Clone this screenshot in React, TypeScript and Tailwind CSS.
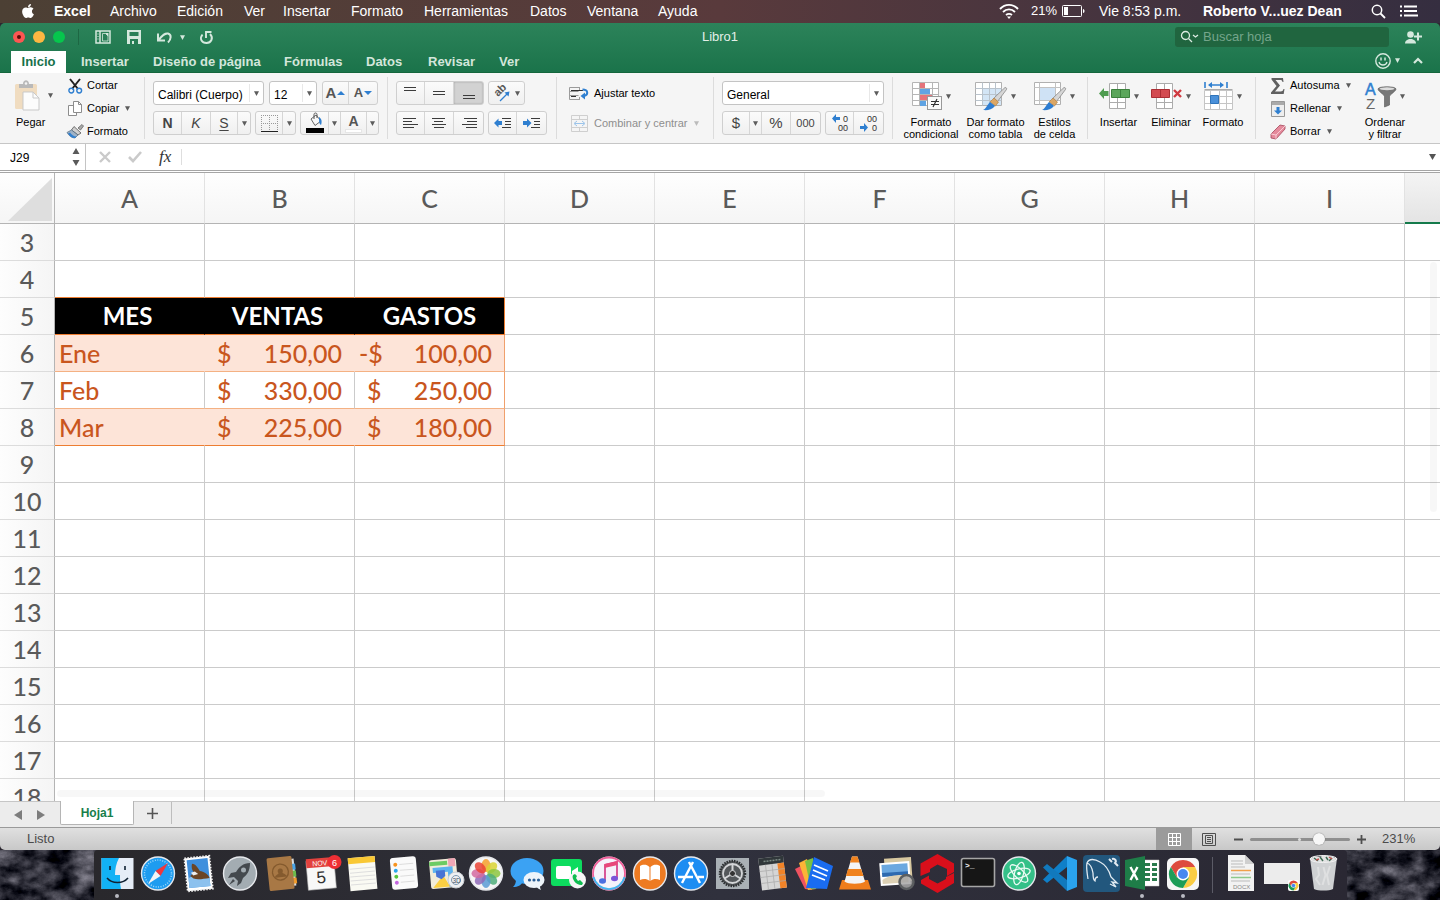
import React from "react";
import { FaApple } from "react-icons/fa";

type Kids = { children?: React.ReactNode };

/* ---------- small shared pieces ---------- */

function Caret({ className = "text-[#5c5c5c]" }: { className?: string }) {
  return (
    <svg viewBox="0 0 5 5" className={`h-[5px] w-[5px] shrink-0 ${className}`} aria-hidden="true">
      <path d="M0 .3h5L2.500 5z" fill="currentColor" />
    </svg>
  );
}

function Icon({ w, h, children, className = "" }: Kids & { w: number; h: number; className?: string }) {
  return (
    <svg width={w} height={h} viewBox={`0 0 ${w} ${h}`} fill="none" className={`shrink-0 overflow-visible ${className}`} aria-hidden="true">
      {children}
    </svg>
  );
}

function ButtonGroup({ children }: Kids) {
  return (
    <div className="flex h-6 divide-x divide-[#d6d6d6] rounded-[3px] border border-[#cfcfcf] bg-gradient-to-b from-[#fbfbfb] to-[#f0f0f0]">
      {children}
    </div>
  );
}

function Tool({ label, width, active = false, children }: Kids & { label: string; width: string; active?: boolean }) {
  return (
    <button
      type="button"
      aria-label={label}
      className={`flex h-full items-center justify-center text-[#444] ${width} ${active ? "rounded-r-[2px] bg-[#d2d2d2] shadow-[inset_0_0_2px_#999]" : ""}`}
    >
      {children}
    </button>
  );
}

function Combo({ label, value, width, pad = "pl-1" }: { label: string; value: string; width: string; pad?: string }) {
  return (
    <div className={`relative h-6 rounded-[3px] border border-[#c4c4c4] bg-white ${width}`}>
      <select aria-label={label} defaultValue={value} className={`h-full w-full appearance-none bg-transparent pb-[2px] text-[12px] text-black outline-none ${pad}`}>
        <option>{value}</option>
      </select>
      <span className="pointer-events-none absolute inset-y-[2px] right-0 flex w-[14px] items-center justify-center border-l border-[#e8e8e8]">
        <Caret />
      </span>
    </div>
  );
}

function Group({ width, children }: Kids & { width: string }) {
  return <section className={`relative h-full shrink-0 ${width}`}>{children}</section>;
}

function Separator() {
  return <div className="my-1 w-px shrink-0 bg-[#dcdcdc]" />;
}

function RowTool({ label, icon, caret = false, muted = false, wide = false }: { label: string; icon: React.ReactNode; caret?: boolean; muted?: boolean; wide?: boolean }) {
  return (
    <button type="button" className={`flex h-[23px] items-center whitespace-nowrap text-[11px] ${muted ? "text-[#8e8e8e]" : "text-black"}`}>
      <span className={`flex justify-center ${wide ? "mr-[5px] w-5" : "mr-[3px] w-[18px]"}`}>{icon}</span>
      {label}
      {caret && <span className="ml-[6px]"><Caret className={muted ? "text-[#bbb]" : "text-[#5c5c5c]"} /></span>}
    </button>
  );
}

function BigTool({ lines, icon, width }: { lines: string[]; icon: React.ReactNode; width: string }) {
  return (
    <button type="button" className={`flex flex-col items-center pt-2 text-[11px] leading-3 text-black ${width}`}>
      <span className="mb-1 flex h-[31px] items-center gap-1">
        {icon}
        <Caret />
      </span>
      {lines.map((l) => (
        <span key={l} className="whitespace-nowrap">{l}</span>
      ))}
    </button>
  );
}

/* ---------- ribbon icons ---------- */

const blue = "#2f7fd0";

const PasteIcon = () => (
  <Icon w={25} h={31}>
    <rect x="0" y="4" width="22" height="25" rx="1.5" fill="#f0dcc0" />
    <path d="M4 8V4h4c0-5 6-5 6 0h4v4z" fill="#b9b9b9" />
    <circle cx="11" cy="3.5" r="1.3" fill="#f5f5f5" />
    <path d="M8 12h10l6 6v12H8z" fill="#fcfcfc" stroke="#c9c9c9" />
    <path d="M18 12v6h6" stroke="#c9c9c9" />
  </Icon>
);

const ScissorsIcon = () => (
  <Icon w={15} h={16}>
    <path d="M2 1l8 10M12 1L4 11" stroke="#222" strokeWidth="2" />
    <circle cx="3.3" cy="12.6" r="2.4" stroke={blue} strokeWidth="1.4" />
    <circle cx="11.2" cy="12.6" r="2.4" stroke={blue} strokeWidth="1.4" />
  </Icon>
);

const CopyIcon = () => (
  <Icon w={15} h={16}>
    <path d="M5.500 4.500h-5v10h8v-3" fill="#fff" stroke="#8d8d8d" />
    <path d="M5.500.500h5l3 3v8h-8z" fill="#fff" stroke="#8d8d8d" />
    <path d="M10.500.500v3h3" stroke="#8d8d8d" />
  </Icon>
);

const BrushIcon = () => (
  <Icon w={17} h={15}>
    <path d="M11 4l4-3.500L16.500 2l-3 4z" fill="#aaa" stroke="#666" strokeWidth=".8" />
    <path d="M7 2.500l7 6.500-3 2-6.500-5z" fill="#cfcfcf" stroke="#666" strokeWidth=".9" />
    <path d="M4.500 6l6.500 5-3 3C5 14 2 12 0 8.500z" fill="#9fb2c6" stroke="#4e6880" strokeWidth=".7" />
    <path d="M1 9.500c2 3 4 4.500 7 4.500l1.500-1.500c-3 0-5-2-6.500-4z" fill={blue} />
  </Icon>
);

function Lines({ rows }: { rows: [number, number, number][] }) {
  return (
    <Icon w={16} h={14}>
      {rows.map(([x, y, w]) => (
        <rect key={y} x={x} y={y} width={w} height="1" fill="#3c3c3c" />
      ))}
    </Icon>
  );
}

const IndentIcon = ({ right = false }: { right?: boolean }) => (
  <Icon w={18} h={12}>
    {right ? <path d="M0 4h4V1.500L8.500 6 4 10.500V8H0z" fill={blue} /> : <path d="M8 4H4.500V1.500L0 6l4.500 4.500V8H8z" fill={blue} />}
    <path d="M8 1.500h9M11 4.500h6M11 7.500h6M8 10.500h9" stroke="#3c3c3c" />
  </Icon>
);

const OrientIcon = () => (
  <Icon w={19} h={18}>
    <text x="0" y="0" transform="translate(5 13) rotate(-45)" fontFamily="Liberation Sans" fontSize="11" fontWeight="bold" fill="#555">ab</text>
    <path d="M7 17l8-8" stroke={blue} strokeWidth="1.3" />
    <path d="M16.500 7.500l-1 5-4-4z" fill={blue} />
  </Icon>
);

const WrapIcon = () => (
  <Icon w={20} h={15}>
    <path d="M11 1.500H.500v12H11M.500 5.500h9M.500 9.500h9M10.500 1.500v3M10.500 11v2.500" stroke="#9b9b9b" />
    <path d="M2 4.500h12M2 10.500h5" stroke="#333" />
    <path d="M13.500 3.500c6 0 6 5.500 1.500 6.500" stroke={blue} strokeWidth="2" />
    <path d="M16 6.500v7L11.500 10z" fill={blue} />
  </Icon>
);

const MergeIcon = () => (
  <Icon w={17} h={17}>
    <path d="M.500.500h16v16H.500zM.500 4.500h16M.500 12.500h16M8.500 .500v4M8.500 12.500v4" stroke="#cfcfcf" />
    <path d="M4 8.500h9M6 6L3 8.500 6 11M11 6l3 2.500L11 11" stroke="#9cc4ea" />
  </Icon>
);

const CondIcon = () => (
  <Icon w={30} h={29}>
    <path d="M.5.500h26v23H.500zM.500 6.500h26M.500 12.500h26M.500 18.500h26M7.500.500v23M20.500.500v23" fill="#fff" stroke="#b5b5b5" />
    <path d="M8 1h5v5H8z" fill="#e5737a" />
    <path d="M8 7h10v5H8z" fill="#5fa3e3" />
    <path d="M8 13h12v5H8z" fill="#e5737a" />
    <path d="M8 19h6v5H8z" fill="#5fa3e3" />
    <rect x="15.500" y="14.500" width="14" height="13" fill="#fafafa" stroke="#999" />
    <path d="M19 19.500h8M19 22.500h8M25 17l-4 8" stroke="#333" strokeWidth="1.200" />
  </Icon>
);

const PaintStroke = () => (
  <>
    <path d="M30 5.500c1.500 0 2 1 1.500 2l-9 12-4-3z" fill="#d6d6d6" stroke="#888" strokeWidth=".8" />
    <path d="M19 16l4.500 4-3 4-5.500-4z" fill="#dba766" stroke="#a9793d" strokeWidth=".6" />
    <path d="M15 20l5 4c-3 4-8 4.500-12 4 3-1 4-5 7-8z" fill="#2d7dd2" />
  </>
);

const TableFormatIcon = () => (
  <Icon w={32} h={29}>
    <path d="M.500.500h26v23H.500z" fill="#fff" stroke="#b0b0b0" />
    <path d="M8 7h18v16H8z" fill="#d3e5f5" />
    <path d="M.500 6.500h26M.500 12.500h26M.500 18.500h26M7.500.500v23M14.500.500v23M20.500.500v23" stroke="#b9c3cc" />
    <PaintStroke />
  </Icon>
);

const CellStyleIcon = () => (
  <Icon w={32} h={29}>
    <path d="M.500.500h26v22H.500z" fill="#fff" stroke="#b0b0b0" />
    <path d="M6 6h15v12H6z" fill="#cfe2f5" />
    <path d="M.500 5.500h26M.500 18.500h26M5.500.500v22M21.500.500v22" stroke="#c2c2c2" />
    <PaintStroke />
  </Icon>
);

const InsertCellsIcon = () => (
  <Icon w={31} h={27}>
    <path d="M10.500.500h16v25h-16zM10.500 19.500h16M18.500.500v25" fill="#fff" stroke="#ababab" />
    <path d="M12.500 6.500h18v8h-18zM21.500 6.500v8" fill="#5ba65b" stroke="#3c813d" />
    <path d="M0 10.500L5 5v3h4.500v5H5v3z" fill="#4f9c50" />
  </Icon>
);

const DeleteCellsIcon = () => (
  <Icon w={31} h={27}>
    <path d="M5.500.500h16v25h-16zM5.500 19.500h16M13.500.500v25" fill="#fff" stroke="#ababab" />
    <path d="M.500 6.500h18v8H.500zM9.500 6.500v8" fill="#d34b51" stroke="#ab2f35" />
    <path d="M23 7l7 7M30 7l-7 7" stroke="#cf3a40" strokeWidth="2.400" />
  </Icon>
);

const FormatCellsIcon = () => (
  <Icon w={29} h={29}>
    <path d="M1 0v6M23 0v6" stroke={blue} strokeWidth="1.600" />
    <path d="M5 3h14" stroke={blue} strokeWidth="1.600" />
    <path d="M4 3l4-3v6zM20 3l-4-3v6z" fill={blue} />
    <path d="M.500 8.500h28v19H.500zM.500 14.500h28M.500 21.500h28M6.500 8.500v19M15.500 8.500v19M22.500 8.500v19" fill="#fff" stroke="#c5c5c5" />
    <path d="M.500 7.500h28" stroke="#aaa" />
    <path d="M6.500 13.500h8v8h-8z" fill="#4a90d9" stroke="#2f74ba" />
  </Icon>
);

const SigmaIcon = () => (
  <Icon w={14} h={16}>
    <path d="M.500 0H12l.5 4h-1c-.3-1.500-.8-2-2.500-2H4.500L9 7.500 4 13.500h5.500c1.800 0 2.500-.8 3-2.500h1l-.8 5H0v-1.500L5.500 8 .5 1.500z" fill="#606060" />
  </Icon>
);

const FillIcon = () => (
  <Icon w={14} h={16}>
    <path d="M.500.500h13v15H.500z" fill="#eee" stroke="#999" />
    <path d="M1 1h12v3H1z" fill="#aaa" />
    <path d="M5.500 6h3v3.500H11L7 13.500 3 9.500h2.500z" fill={blue} />
  </Icon>
);

const EraserIcon = () => (
  <Icon w={16} h={16}>
    <path d="M1 10l9-9 5 1v3L6 15l-5-1z" fill="#e58a9c" stroke="#a4465b" strokeWidth=".8" />
    <path d="M1 10l5 1 9-9M6 11v4" stroke="#f9d3da" strokeWidth=".9" />
  </Icon>
);

const SortIcon = () => (
  <Icon w={31} h={27}>
    <text x="0" y="12" fontFamily="Liberation Sans" fontSize="16" fill={blue} stroke={blue} strokeWidth=".5">A</text>
    <text x="1" y="26" fontFamily="Liberation Sans" fontSize="15" fill="#666">Z</text>
    <path d="M13 6c0-3 18-3 18 0 0 2-5 5-6.500 7v9l-5 2v-11C18 11 13 8 13 6z" fill="#777" stroke="#555" strokeWidth=".6" />
    <ellipse cx="22" cy="5.800" rx="7.500" ry="1.500" fill="#ddd" />
  </Icon>
);

/* ---------- top bars ---------- */

const menus: [string, string][] = [
  ["Archivo", "w-[67px]"],
  ["Edición", "w-[67px]"],
  ["Ver", "w-[39px]"],
  ["Insertar", "w-[68px]"],
  ["Formato", "w-[73px]"],
  ["Herramientas", "w-[106px]"],
  ["Datos", "w-[57px]"],
  ["Ventana", "w-[71px]"],
  ["Ayuda", "w-[50px]"],
];

function MenuBar() {
  return (
    <header className="flex h-[23px] shrink-0 items-center justify-between bg-gradient-to-r from-[#4c4034] via-[#593a3c] to-[#352e40] pb-px text-[14px] leading-5 text-white">
      <nav className="flex items-center pl-5">
        <FaApple className="mr-[18px] h-4 w-4" />
        <button type="button" className="w-14 text-left font-bold">Excel</button>
        {menus.map(([name, w]) => (
          <button key={name} type="button" className={`text-left ${w}`}>{name}</button>
        ))}
      </nav>
      <div className="flex items-center pr-[22px]">
        <Icon w={20} h={16} className="mr-3">
          <path d="M1 6c5-5.500 13-5.500 18 0M4 9c3.500-3.500 8.500-3.500 12 0M7 12c2-1.500 4-1.500 6 0" stroke="#fff" strokeWidth="1.900" />
          <path d="M8 13.500h4L10 16z" fill="#fff" />
        </Icon>
        <span className="mr-[5px] text-[13px]">21%</span>
        <Icon w={23} h={12} className="mr-[14px]">
          <rect x=".5" y=".5" width="19" height="11" rx="1" stroke="#fff" />
          <path d="M2 2h4v8H2zM21 4c2 0 2 4 0 4z" fill="#fff" />
        </Icon>
        <span className="mr-[18px] w-[86px] whitespace-nowrap">Vie 8:53 p.m.</span>
        <span className="mr-6 w-[144px] whitespace-nowrap font-bold">Roberto V...uez Dean</span>
        <Icon w={15} h={15} className="mr-[14px]">
          <circle cx="6" cy="6" r="4.700" stroke="#fff" strokeWidth="1.500" />
          <path d="M9.500 9.500L14 14" stroke="#fff" strokeWidth="1.800" />
        </Icon>
        <Icon w={18} h={12}>
          <path d="M0 1.500h2M4 1.500h13M0 6h2M4 6h13M0 10.500h2M4 10.500h14" stroke="#fff" strokeWidth="1.800" />
        </Icon>
      </div>
    </header>
  );
}

function TitleBar() {
  return (
    <div className="grid h-7 grid-cols-[1fr_auto_1fr] items-center">
      <div className="flex items-center pl-[13px]">
        <button type="button" aria-label="Cerrar" className="mr-2 flex h-3 w-3 items-center justify-center rounded-full bg-[#fc5652]">
          <span className="h-1 w-1 rounded-full bg-[#5c0a08]" />
        </button>
        <button type="button" aria-label="Minimizar" className="mr-2 h-3 w-3 rounded-full bg-[#fdb742]" />
        <button type="button" aria-label="Ampliar" className="h-3 w-3 rounded-full bg-[#06c64d]" />
        <span className="ml-[13px] mr-4 h-4 w-px bg-[#1d6743]" />
        <button type="button" aria-label="Galería">
          <Icon w={16} h={14}>
            <path d="M5 1h10v12H5zM5 1H1v12h4" stroke="#d5e8dd" strokeWidth="1.500" />
            <path d="M2.500 4h1M2.500 6.500h1M2.500 9h1" stroke="#d5e8dd" strokeWidth="1.200" />
            <path d="M7.500 3.500h3l2.500 2.500v5H7.500z" stroke="#d5e8dd" strokeWidth=".8" />
            <path d="M10 3l3.500 3.500V3z" fill="#d5e8dd" />
          </Icon>
        </button>
        <button type="button" aria-label="Guardar" className="ml-4">
          <Icon w={14} h={14}>
            <path d="M0 0h14v14H0zM2.500 2v4h9V2zM3 9v5h8V9z" fill="#d5e8dd" fillRule="evenodd" />
            <path d="M5 11h2v3H5z" fill="#d5e8dd" />
          </Icon>
        </button>
        <button type="button" aria-label="Deshacer" className="ml-4 flex items-center gap-2">
          <Icon w={15} h={13}>
            <path d="M1 2.500v7h7M1.500 9C6 3.500 8 2 11 2.500c4 1 3 6 0 9" stroke="#d5e8dd" strokeWidth="2" />
          </Icon>
          <Caret className="text-[#d5e8dd]" />
        </button>
        <button type="button" aria-label="Repetir" className="ml-[15px]">
          <Icon w={13} h={14}>
            <path d="M2.500 4.500C-1 9 2 13 6.500 13s7.500-5 3.500-9" stroke="#d5e8dd" strokeWidth="1.900" />
            <path d="M6 8V2h5.500" stroke="#d5e8dd" strokeWidth="1.900" />
          </Icon>
        </button>
      </div>
      <h1 className="text-[13px] text-[#e4efe8]">Libro1</h1>
      <div className="flex items-center justify-end pr-[18px]">
        <div className="mr-4 flex h-5 w-[214px] items-center rounded-[3px] bg-[#20653f] pl-[5px]">
          <Icon w={19} h={14} className="mr-1">
            <circle cx="5.500" cy="5.500" r="4" stroke="#dcebe2" strokeWidth="1.300" />
            <path d="M8.500 8.500L12 12M13 5l2.500 2L18 5" stroke="#dcebe2" strokeWidth="1.300" />
          </Icon>
          <input aria-label="Buscar hoja" placeholder="Buscar hoja" className="w-40 bg-transparent text-[13px] text-white outline-none placeholder:text-[#75a58b]" />
        </div>
        <button type="button" aria-label="Compartir">
          <Icon w={17} h={13}>
            <circle cx="5.500" cy="3.500" r="3.300" fill="#d5e8dd" />
            <path d="M0 12.500c0-6 11-6 11 0z" fill="#d5e8dd" />
            <path d="M13 1.500v8M9 5.500h8" stroke="#d5e8dd" strokeWidth="2" />
          </Icon>
        </button>
      </div>
    </div>
  );
}

const ribbonTabs: [string, string][] = [
  ["Insertar", "w-[72px]"],
  ["Diseño de página", "w-[131px]"],
  ["Fórmulas", "w-[82px]"],
  ["Datos", "w-[62px]"],
  ["Revisar", "w-[71px]"],
  ["Ver", "w-[50px]"],
];

function RibbonTabs() {
  return (
    <div className="flex h-[22px] items-stretch justify-between border-b border-[#14663c] pl-[11px] text-[13px] font-bold">
      <nav className="flex">
        <button type="button" className="-mb-px w-[55px] bg-white text-[#17714a]">Inicio</button>
        {ribbonTabs.map(([name, w]) => (
          <button key={name} type="button" className={`whitespace-nowrap pl-[15px] pt-px text-left text-[#d3e6db] ${w}`}>{name}</button>
        ))}
      </nav>
      <div className="flex items-center pb-[2px] pr-[17px]">
        <button type="button" aria-label="Comentarios" className="flex items-center gap-1">
          <Icon w={16} h={16}>
            <circle cx="8" cy="8" r="7.200" stroke="#d5e8dd" strokeWidth="1.400" />
            <path d="M6 4.500v3M10 4.500v3" stroke="#d5e8dd" strokeWidth="1.500" />
            <path d="M4 9c1 4 7 4 8 0" stroke="#d5e8dd" strokeWidth="1.300" />
          </Icon>
          <Caret className="text-[#d5e8dd]" />
        </button>
        <button type="button" aria-label="Contraer cinta" className="ml-[13px]">
          <Icon w={10} h={7}><path d="M1 6l4-4 4 4" stroke="#d5e8dd" strokeWidth="2.200" /></Icon>
        </button>
      </div>
    </div>
  );
}

/* ---------- ribbon ---------- */

function Ribbon() {
  return (
    <div className="flex h-[71px] shrink-0 border-b border-[#c6c6c6] bg-[#f5f5f5]">
      <Group width="w-[144px]">
        <div className="flex">
          <button type="button" className="flex w-[63px] flex-col items-start pl-[15px] pt-[7px] text-[11px] text-black">
            <span className="flex items-center gap-2"><PasteIcon /><Caret /></span>
            <span className="mt-[3px] pl-px">Pegar</span>
          </button>
          <div className="flex flex-col pl-[3px] pt-px">
            <RowTool label="Cortar" icon={<ScissorsIcon />} />
            <RowTool label="Copiar" icon={<CopyIcon />} caret />
            <RowTool label="Formato" icon={<BrushIcon />} />
          </div>
        </div>
      </Group>
      <Separator />
      <Group width="w-[242px]">
        <div className="flex flex-col gap-[6px] pl-2 pt-2">
          <div className="flex gap-[5px]">
            <Combo label="Fuente" value="Calibri (Cuerpo)" width="w-[111px]" />
            <Combo label="Tamaño de fuente" value="12" width="w-[48px]" />
            <ButtonGroup>
              <Tool label="Aumentar fuente" width="w-[26px]">
                <span className="text-[15px] font-bold text-[#555]">A</span>
                <svg viewBox="0 0 8 4" className="ml-px h-1 w-2"><path d="M0 4h8L4 0z" fill="#2f7fd0" /></svg>
              </Tool>
              <Tool label="Reducir fuente" width="w-[28px]">
                <span className="text-[13px] font-bold text-[#555]">A</span>
                <svg viewBox="0 0 8 4" className="ml-px h-1 w-2"><path d="M0 0h8L4 4z" fill="#2f7fd0" /></svg>
              </Tool>
            </ButtonGroup>
          </div>
          <div className="flex gap-1">
            <ButtonGroup>
              <Tool label="Negrita" width="w-[28px]"><span className="text-[14px] font-bold">N</span></Tool>
              <Tool label="Cursiva" width="w-[29px]"><span className="text-[14px] italic">K</span></Tool>
              <Tool label="Subrayado" width="w-[27px]"><span className="text-[14px] underline underline-offset-2">S</span></Tool>
              <Tool label="Opciones de subrayado" width="w-[12px]"><Caret /></Tool>
            </ButtonGroup>
            <ButtonGroup>
              <Tool label="Bordes" width="w-[27px]">
                <Icon w={17} h={17}>
                  <path d="M.500 0v16M8.500 0v16M16.500 0v16M0 .5h17M0 8.500h17" stroke="#999" strokeDasharray="1 1" />
                  <path d="M0 16.500h17" stroke="#222" />
                </Icon>
              </Tool>
              <Tool label="Opciones de bordes" width="w-[12px]"><Caret /></Tool>
            </ButtonGroup>
            <ButtonGroup>
              <Tool label="Color de relleno" width="w-[28px]">
                <Icon w={18} h={20}>
                  <path d="M5 6l5-4 5 6-6 4.500z" fill="#f7f7f7" stroke="#666" />
                  <path d="M8 6V1.500c0-2 3-2 3 0V5" stroke="#555" />
                  <path d="M13 4c3 2 3 5 2 8-2-1-2-4-2-8z" fill={blue} />
                  <path d="M0 15h18v5H0z" fill="#000" />
                </Icon>
              </Tool>
              <Tool label="Opciones de relleno" width="w-[12px]"><Caret /></Tool>
              <Tool label="Color de fuente" width="w-[26px]">
                <span className="flex flex-col items-center">
                  <span className="text-[14px] font-bold leading-4 text-[#555]">A</span>
                  <span className="h-1 w-[17px] border border-[#e6e6e6] bg-white" />
                </span>
              </Tool>
              <Tool label="Opciones de color" width="w-[11px]"><Caret /></Tool>
            </ButtonGroup>
          </div>
        </div>
      </Group>
      <Separator />
      <Group width="w-[168px]">
        <div className="flex flex-col gap-[6px] pl-2 pt-2">
          <div className="flex gap-1">
            <ButtonGroup>
              <Tool label="Alinear arriba" width="w-[28px]"><Lines rows={[[1, 1, 12], [1, 4, 12]]} /></Tool>
              <Tool label="Alinear al medio" width="w-[29px]"><Lines rows={[[2, 5, 12], [2, 8, 12]]} /></Tool>
              <Tool label="Alinear abajo" width="w-[29px]" active><Lines rows={[[2, 9, 12], [2, 12, 12]]} /></Tool>
            </ButtonGroup>
            <ButtonGroup>
              <Tool label="Orientación" width="w-[35px]"><OrientIcon /><span className="ml-[3px]"><Caret /></span></Tool>
            </ButtonGroup>
          </div>
          <div className="flex gap-1">
            <ButtonGroup>
              <Tool label="Alinear a la izquierda" width="w-[28px]"><Lines rows={[[0, 2, 13], [0, 5, 9], [0, 8, 15], [0, 11, 11]]} /></Tool>
              <Tool label="Centrar" width="w-[29px]"><Lines rows={[[1, 2, 13], [3, 5, 9], [1, 8, 14], [3, 11, 10]]} /></Tool>
              <Tool label="Alinear a la derecha" width="w-[29px]"><Lines rows={[[3, 2, 13], [6, 5, 10], [1, 8, 15], [5, 11, 11]]} /></Tool>
            </ButtonGroup>
            <ButtonGroup>
              <Tool label="Disminuir sangría" width="w-[28px]"><IndentIcon /></Tool>
              <Tool label="Aumentar sangría" width="w-[29px]"><IndentIcon right /></Tool>
            </ButtonGroup>
          </div>
        </div>
      </Group>
      <Separator />
      <Group width="w-[156px]">
        <div className="flex flex-col items-start gap-[7px] pl-3 pt-[9px]">
          <RowTool label="Ajustar texto" icon={<WrapIcon />} wide />
          <RowTool label="Combinar y centrar" icon={<MergeIcon />} caret muted wide />
        </div>
      </Group>
      <Separator />
      <Group width="w-[178px]">
        <div className="flex flex-col gap-[6px] pl-2 pt-2">
          <Combo label="Formato de número" value="General" width="w-[162px]" />
          <div className="flex gap-1">
            <ButtonGroup>
              <Tool label="Moneda" width="w-[27px]"><span className="text-[15px]">$</span></Tool>
              <Tool label="Opciones de moneda" width="w-[12px]"><Caret /></Tool>
              <Tool label="Porcentaje" width="w-[29px]"><span className="text-[15px]">%</span></Tool>
              <Tool label="Separador de miles" width="w-[29px]"><span className="text-[11px]">000</span></Tool>
            </ButtonGroup>
            <ButtonGroup>
              <Tool label="Aumentar decimales" width="w-[28px]">
                <Icon w={18} h={18}>
                  <path d="M9 3H5V0L1 4.500 5 9V6h4z" fill={blue} />
                  <text x="12" y="8" fontFamily="Liberation Sans" fontSize="9" fill="#333">0</text>
                  <text x="7" y="17" fontFamily="Liberation Sans" fontSize="9" fill="#333">00</text>
                </Icon>
              </Tool>
              <Tool label="Disminuir decimales" width="w-[29px]">
                <Icon w={18} h={18}>
                  <path d="M0 12h4V9l4 4.500L4 18v-3H0z" fill={blue} />
                  <text x="7" y="8" fontFamily="Liberation Sans" fontSize="9" fill="#333">00</text>
                  <text x="12" y="17" fontFamily="Liberation Sans" fontSize="9" fill="#333">0</text>
                </Icon>
              </Tool>
            </ButtonGroup>
          </div>
        </div>
      </Group>
      <Separator />
      <Group width="w-[194px]">
        <div className="flex pl-[9px]">
          <BigTool width="w-[58px]" lines={["Formato", "condicional"]} icon={<CondIcon />} />
          <BigTool width="w-[71px]" lines={["Dar formato", "como tabla"]} icon={<TableFormatIcon />} />
          <BigTool width="w-[47px]" lines={["Estilos", "de celda"]} icon={<CellStyleIcon />} />
        </div>
      </Group>
      <Separator />
      <Group width="w-[167px]">
        <div className="flex pl-1">
          <BigTool width="w-[53px]" lines={["Insertar"]} icon={<InsertCellsIcon />} />
          <BigTool width="w-[52px]" lines={["Eliminar"]} icon={<DeleteCellsIcon />} />
          <BigTool width="w-[52px]" lines={["Formato"]} icon={<FormatCellsIcon />} />
        </div>
      </Group>
      <Separator />
      <Group width="w-[184px]">
        <div className="flex">
          <div className="flex w-[104px] flex-col items-start pl-[13px] pt-px">
            <RowTool label="Autosuma" icon={<SigmaIcon />} caret />
            <RowTool label="Rellenar" icon={<FillIcon />} caret />
            <RowTool label="Borrar" icon={<EraserIcon />} caret />
          </div>
          <BigTool width="w-[50px]" lines={["Ordenar", "y filtrar"]} icon={<SortIcon />} />
        </div>
      </Group>
    </div>
  );
}

function FormulaBar() {
  return (
    <div className="flex h-[29px] shrink-0 items-center border-b-[3px] border-double border-[#a5a5a5] bg-white">
      <div className="flex h-full w-[86px] items-center justify-between border-r border-[#c4c4c4] pl-[10px] pr-[5px]">
        <input aria-label="Cuadro de nombres" defaultValue="J29" className="w-14 bg-transparent pt-[2px] text-[12px] text-black outline-none" />
        <Icon w={8} h={18}><path d="M.500 6h7L4 0zM.500 12h7L4 18z" fill="#5a5a5a" /></Icon>
      </div>
      <button type="button" aria-label="Cancelar" className="ml-[13px]">
        <Icon w={12} h={12}><path d="M1 1l10 10M11 1L1 11" stroke="#cacaca" strokeWidth="2.400" /></Icon>
      </button>
      <button type="button" aria-label="Aceptar" className="ml-[17px]">
        <Icon w={14} h={12}><path d="M1 6l4 4 8-9" stroke="#cacaca" strokeWidth="2.600" /></Icon>
      </button>
      <span className="ml-[17px] w-[22px] font-['Liberation_Serif',serif] text-[17px] italic leading-5 text-[#333]">fx</span>
      <input aria-label="Barra de fórmulas" className="h-4 min-w-0 flex-1 border-l border-[#dedede] bg-transparent outline-none" />
      <button type="button" aria-label="Expandir" className="mr-1">
        <Icon w={7} h={6}><path d="M0 0h7L3.500 6z" fill="#555" /></Icon>
      </button>
    </div>
  );
}

/* ---------- sheet ---------- */

const columns = ["A", "B", "C", "D", "E", "F", "G", "H", "I"];
const rowNumbers = Array.from({ length: 16 }, (_, i) => i + 3);

type Money = { sign: string; amount: string };
const data: Record<number, [string, Money, Money]> = {
  6: ["Ene", { sign: "$", amount: "150,00" }, { sign: "-$", amount: "100,00" }],
  7: ["Feb", { sign: "$", amount: "330,00" }, { sign: "$", amount: "250,00" }],
  8: ["Mar", { sign: "$", amount: "225,00" }, { sign: "$", amount: "180,00" }],
};
const heads = ["MES", "VENTAS", "GASTOS"];

function Cell({ row, col }: { row: number; col: number }) {
  if (col > 2 || row < 4 || row > 8) return <td className="border-b border-r border-[#cbcbcb] p-0" />;
  if (row === 4) return <td className="border-b border-r border-b-[#ed7d31] border-r-[#cbcbcb] p-0" />;
  if (row === 5)
    return (
      <th scope="col" className={`border-b border-r border-b-[#ed7d31] bg-black p-0 text-center text-[24px] font-bold text-white ${col === 2 ? "border-r-[#ed7d31]" : "border-r-black pr-1"}`}>
        {heads[col]}
      </th>
    );
  const value = data[row][col];
  const band = row === 7 ? "bg-white" : "bg-[#fde4d8]";
  const bottom = row === 8 ? "border-b-[#ed7d31]" : "border-b-[#f4b183]";
  const side = col === 2 ? "border-r-[#f0a06c]" : row === 7 ? "border-r-[#cbcbcb]" : "border-r-[#fde4d8]";
  return (
    <td className={`border-b border-r p-0 font-medium text-[#c9561e] ${band} ${bottom} ${side}`}>
      {typeof value === "string" ? (
        <span className="pl-1">{value}</span>
      ) : (
        <span className={`flex justify-between pr-3 ${value.sign === "-$" ? "pl-1" : "pl-3"}`}>
          <span>{value.sign}</span>
          <span>{value.amount}</span>
        </span>
      )}
    </td>
  );
}

function Sheet() {
  return (
    <main className="relative min-h-0 flex-1 overflow-hidden bg-white">
      <table className="w-full table-fixed border-separate border-spacing-0 font-[Lato,sans-serif] text-[25px] leading-8">
        <colgroup>
          <col className="w-[55px]" />
          {columns.map((c) => <col key={c} className="w-[150px]" />)}
          <col />
        </colgroup>
        <thead>
          <tr className="h-[51px] bg-gradient-to-b from-[#fefefe] to-[#f5f5f5] text-[#5a5a5a]">
            <th className="border-b border-r border-[#b4b4b4] p-0" aria-label="Seleccionar todo">
              <svg viewBox="0 0 54 50" className="h-[50px] w-[54px]"><path d="M52 5v43H8z" fill="#dedede" /></svg>
            </th>
            {columns.map((c) => (
              <th key={c} scope="col" className="border-b border-r border-b-[#b4b4b4] border-r-[#e2e2e2] p-0 font-medium">{c}</th>
            ))}
            <th className="border-b-2 border-[#147a4b] bg-gradient-to-b from-[#f4f4f4] to-[#e4e4e4] p-0" aria-label="J" />
          </tr>
        </thead>
        <tbody>
          {rowNumbers.map((r) => (
            <tr key={r} className="h-[37px]">
              <th scope="row" className="border-b border-r border-b-[#dcdcdc] border-r-[#b4b4b4] bg-gradient-to-r from-[#fdfdfd] to-[#f5f5f5] p-0 font-medium text-[#5a5a5a]">{r}</th>
              {columns.map((c, i) => <Cell key={c} row={r} col={i} />)}
              <td className="border-b border-[#cbcbcb] p-0" />
            </tr>
          ))}
        </tbody>
      </table>
      <div className="absolute bottom-1 left-[57px] h-[7px] w-[768px] rounded-full bg-black/3" />
      <div className="absolute right-[3px] top-[89px] h-[250px] w-[7px] rounded-full bg-black/3" />
    </main>
  );
}

function SheetTabs() {
  return (
    <div className="flex h-[26px] shrink-0 items-start border-t border-[#c6c6c6] bg-[#ececec]">
      <div className="flex h-[25px] w-[60px] items-center gap-[15px] pl-[14px]">
        <button type="button" aria-label="Hoja anterior"><Icon w={8} h={10}><path d="M8 0v10L0 5z" fill="#7d7d7d" /></Icon></button>
        <button type="button" aria-label="Hoja siguiente"><Icon w={8} h={10}><path d="M0 0v10l8-5z" fill="#7d7d7d" /></Icon></button>
      </div>
      <button type="button" className="-mt-px h-[24px] w-[74px] rounded-b-[2px] border-x border-b border-[#b5b5b5] bg-white pt-px text-[12px] font-bold text-[#17804b]">Hoja1</button>
      <button type="button" aria-label="Nueva hoja" className="flex h-[22px] w-[38px] items-center justify-center border-r border-[#bdbdbd]">
        <Icon w={11} h={11}><path d="M5.500 0v11M0 5.500h11" stroke="#555" strokeWidth="1.600" /></Icon>
      </button>
    </div>
  );
}

function StatusBar() {
  return (
    <div className="flex h-[23px] shrink-0 items-center justify-between border-t border-[#9a9a9a] bg-gradient-to-b from-[#e0e0e0] to-[#c8c8c8] pl-[27px] text-[13px] text-[#4b4b4b]">
      <span>Listo</span>
      <div className="flex h-full items-center pr-[22px]">
        <button type="button" aria-label="Vista normal" className="flex h-full w-[36px] items-center justify-center bg-[#9b9b9b]">
          <Icon w={13} h={13}><path d="M.500.500h12v12H.500zM.500 4.500h12M.500 8.500h12M4.500.500v12M8.500.500v12" stroke="#fff" /></Icon>
        </button>
        <button type="button" aria-label="Diseño de página" className="ml-[10px]">
          <Icon w={14} h={13}><path d="M.500.500h13v12h-13zM3.500 2.500h7v8h-7zM5 4.500h4M5 6.500h4M5 8.500h4" stroke="#4f4f4f" /></Icon>
        </button>
        <button type="button" aria-label="Reducir" className="ml-[18px]"><Icon w={9} h={9}><path d="M0 4.500h9" stroke="#4f4f4f" strokeWidth="2" /></Icon></button>
        <div className="relative mx-[7px] flex w-[100px] items-center">
          <input
            type="range"
            aria-label="Zoom"
            min={0}
            max={100}
            defaultValue={72}
            className="h-[3px] w-full appearance-none rounded-full bg-[#8f8f8f] [&::-webkit-slider-thumb]:h-3 [&::-webkit-slider-thumb]:w-3 [&::-webkit-slider-thumb]:appearance-none [&::-webkit-slider-thumb]:rounded-full [&::-webkit-slider-thumb]:bg-[#f7f7f7] [&::-webkit-slider-thumb]:shadow-[0_0_1px_#555]"
          />
          <span className="pointer-events-none absolute left-[48px] h-[3px] w-[3px] rounded-full bg-[#ddd]" />
        </div>
        <button type="button" aria-label="Ampliar"><Icon w={9} h={9}><path d="M0 4.500h9M4.500 0v9" stroke="#4f4f4f" strokeWidth="1.800" /></Icon></button>
        <span className="ml-4 w-[36px]">231%</span>
      </div>
    </div>
  );
}

/* ---------- dock ---------- */

const petals = ["#f6a02c", "#d9d335", "#8cc63f", "#4fae7a", "#5b9bd5", "#8f6bb8", "#d46aa0", "#ea4335"];

const Ring = ({ fill }: { fill: string }) => <circle cx="20" cy="20.500" r="16.500" fill={fill} stroke="#e6e8ec" strokeWidth="1.400" />;

const Chrome = ({ cx, cy, r }: { cx: number; cy: number; r: number }) => (
  <g transform={`translate(${cx} ${cy}) scale(${r / 12})`}>
    <path d="M-10.400-6A12 12 0 0 1 10.400-6L0-5.500-5.200 3z" fill="#dd4b3e" />
    <path d="M10.400-6A12 12 0 0 1 0 12L5.200 3 0-6z" fill="#fbcd43" />
    <path d="M0 12A12 12 0 0 1-10.400-6L-5.200 3 5.200 3z" fill="#1d9d58" />
    <circle r="5.500" fill="#fff" />
    <circle r="4.300" fill="#4688f1" />
  </g>
);

const dockApps: { name: string; running?: boolean; art: React.ReactNode }[] = [
  { name: "Finder", running: true, art: <>
    <path d="M4.500 5h32v31h-32z" fill="#e6edf7" />
    <path d="M4.500 5H22c-3 6-4 11-4 17h5c0 5 0 9 1 14H4.500z" fill="#12b2f5" />
    <path d="M13 13v4M28 13v4" stroke="#123" strokeWidth="1.600" /><path d="M10 25c5 6 16 6 21 0" stroke="#123" strokeWidth="1.500" /></> },
  { name: "Safari", art: <>
    <Ring fill="#1e9cf0" /><circle cx="20" cy="20.500" r="13.500" stroke="#9bd7fb" strokeDasharray="1 1.500" strokeWidth="1.500" />
    <path d="M30 10L22.500 23l-5-5z" fill="#f0373b" /><path d="M10 31l7.500-13 5 5z" fill="#f4f4f4" /></> },
  { name: "Mail", art: <g transform="rotate(-6 20 20)">
    <path d="M7 4h25v33H7z" fill="#fff" stroke="#f2f2f2" strokeWidth="2" strokeDasharray="1.500 1.500" /><path d="M9 6h21v28H9z" fill="#3f8fdd" /><path d="M9 24c8-3 14 0 21 2v8H9z" fill="#8cc1ee" />
    <path d="M14 10c4 1 5 4 7 8 4 1 8 4 9 8-6 0-11 1-16-1l-3-3 4-3c-2-3-2-6-1-9z" fill="#6b4526" /><path d="M12 19l4-1 3 3-5 1z" fill="#eee" /></g> },
  { name: "Launchpad", art: <>
    <Ring fill="#a3acb2" /><path d="M30 10c-7 0-11 4-14 9l-5 1-3 5 6-1 4 4-1 5 4-3 2-5c4-3 7-7 7-15z" fill="#44494e" /><path d="M13 26l-4 6 6-4z" fill="#44494e" /><circle cx="23.500" cy="17" r="2.500" fill="#a3acb2" /></> },
  { name: "Contactos", art: <g transform="rotate(-6 20 20)">
    <path d="M29 7h5v27h-5z" fill="#ddd" /><path d="M31 12h4v6h-4z" fill="#4aa5e8" /><path d="M31 19h4v6h-4z" fill="#6cbb4c" /><path d="M31 26h4v6h-4z" fill="#f09b2c" />
    <rect x="7" y="4" width="25" height="33" rx="1.500" fill="#a87845" /><circle cx="19.500" cy="19" r="8" stroke="#845a2e" strokeWidth="1.300" /><path d="M13.500 24c1-3 4-3 4-4-3-6 7-6 4 0 0 1 3 1 4 4z" fill="#845a2e" /></g> },
  { name: "Calendario", art: <>
    <g transform="rotate(-5 20 20)"><path d="M5 7h28v29H5z" fill="#f8f8f8" stroke="#bbb" strokeWidth=".6" /><path d="M5 5h28v9H5z" fill="#e2423e" />
    <text x="11" y="12.500" fontFamily="Liberation Sans" fontSize="7" fill="#fff">NOV</text><text x="14" y="30" fontFamily="Liberation Sans" fontSize="17" fill="#333">5</text></g>
    <circle cx="32.500" cy="9" r="7" fill="#ee2f35" /><text x="30" y="12.500" fontFamily="Liberation Sans" fontSize="9" fill="#fff">6</text></> },
  { name: "Notas", art: <g transform="rotate(-5 20 20)"><path d="M6 4h27v33H6z" fill="#fafaf3" /><path d="M6 4h27v6H6z" fill="#f9c834" /><path d="M7 15h25M7 19h25M7 23h25M7 27h25M7 31h25" stroke="#dedede" /></g> },
  { name: "Recordatorios", art: <g transform="rotate(-5 20 20)"><rect x="7" y="4" width="26" height="32" rx="3" fill="#fafafa" />
    <circle cx="12" cy="11" r="2" fill="#f7931e" /><circle cx="12" cy="17" r="2" fill="#2aa7ee" /><circle cx="12" cy="23" r="2" fill="#55c63f" /><circle cx="12" cy="29" r="2" fill="#c466e0" /><path d="M16 11h14M16 17h14M16 23h14M16 29h14" stroke="#ddd" /></g> },
  { name: "Mapas", art: <><g transform="rotate(-5 20 20)"><rect x="5" y="6" width="27" height="29" rx="2" fill="#f1ecd9" /><path d="M5 8h18v4H5z" fill="#6ccb63" /><path d="M24 6h7v8h-7z" fill="#f0a7b5" /><path d="M8 14h20v20h-5V19H8z" fill="#5db3ef" /><path d="M7 34l11-12 6 12z" fill="#fbcf42" /><path d="M11 17h9v6l-4 3-5-3z" fill="#4874d4" /></g>
    <circle cx="31" cy="27" r="8" fill="#eef0f2" stroke="#c9ced3" /><circle cx="31" cy="27" r="4.500" stroke="#7c97b0" /><text x="27.500" y="29.500" fontFamily="Liberation Sans" fontSize="6.500" fill="#456">3D</text></> },
  { name: "Fotos", art: <><Ring fill="#f6f6f6" />{petals.map((c, i) => <ellipse key={c} cx="20" cy="12.500" rx="4.500" ry="6.500" fill={c} fillOpacity=".85" transform={`rotate(${i * 45} 20 20.500)`} />)}</> },
  { name: "Mensajes", art: <><ellipse cx="20" cy="18" rx="16.500" ry="13" fill="#3ba2f3" /><path d="M9 26c0 4-1 6-3 8 5 0 8-2 10-5z" fill="#3ba2f3" /><ellipse cx="27" cy="27" rx="10.500" ry="8" fill="#eef4fa" /><path d="M29 33c1 2 3 3 5 4-1-2-1-3-1-5z" fill="#eef4fa" /><circle cx="22.500" cy="27" r="1.600" fill="#2b5f96" /><circle cx="27" cy="27" r="1.600" fill="#2b5f96" /><circle cx="31.500" cy="27" r="1.600" fill="#2b5f96" /></> },
  { name: "FaceTime", art: <><rect x="3" y="6" width="31" height="27" rx="3" fill="#0ddc5f" /><rect x="8" y="13" width="15" height="13" rx="2" fill="#fff" /><path d="M24 18l6-4v11l-6-4z" fill="#fff" /><circle cx="29.500" cy="27" r="8.500" fill="#f6f6f6" /><path d="M25 22c-2 4 4 11 9 10l1-2-3-3-2 1-2-3 1-2-2-2z" fill="#0fbd50" /></> },
  { name: "iTunes", art: <><circle cx="20" cy="20.500" r="17" fill="#f5f2fa" /><circle cx="20" cy="20.500" r="16" stroke="#f0609a" strokeWidth="1.800" /><path d="M4.500 24a16 16 0 0 0 31 0" stroke="#45b8f0" strokeWidth="1.800" /><path d="M16 28V12l12-3v16" stroke="#d6488f" strokeWidth="1.800" /><path d="M15.500 11l13-3v4l-13 3z" fill="#e8487a" /><ellipse cx="13.500" cy="28" rx="3.500" ry="2.800" fill="#4b6fe0" /><ellipse cx="25.500" cy="25.500" rx="3.500" ry="2.800" fill="#7b55d8" /></> },
  { name: "iBooks", art: <><Ring fill="#ee7b22" /><path d="M19.500 14c-3-3-7-2.500-9.500-1v14c3-1.500 7-1.500 9.500 1zM20.500 14c3-3 7-2.500 9.500-1v14c-3-1.500-7-1.500-9.500 1z" fill="#fff" /></> },
  { name: "App Store", art: <><Ring fill="#1d8df2" /><path d="M22 9L11 30M18 9l11 21M7 24h15M27 24h6" stroke="#fff" strokeWidth="2.400" /></> },
  { name: "Preferencias", art: <><path d="M4 5h33v31H4z" fill="#aab1b6" /><circle cx="20.500" cy="20.500" r="12.500" fill="#54585b" stroke="#2d3032" strokeWidth="2.500" strokeDasharray="1.500 1" /><circle cx="20.500" cy="20.500" r="9.500" stroke="#d4d6d8" strokeWidth="1.800" /><path d="M20.500 20.500V11M20.500 20.500l8 5M20.500 20.500l-8 5" stroke="#d4d6d8" strokeWidth="2" /><circle cx="20.500" cy="20.500" r="3" fill="#333" stroke="#d4d6d8" /></> },
  { name: "Calculadora", art: <g transform="rotate(-7 20 20)"><path d="M7 4h25v32H7z" fill="#d5d5d5" /><path d="M7 4h25v7H7z" fill="#30373a" /><path d="M25.500 11H32v25h-6.500z" fill="#f18328" /><path d="M7 17h25M7 23h25M7 29h25M13.500 11v25M20 11v25" stroke="#aaa" strokeWidth=".7" /><path d="M12 7.500h17" stroke="#7b8a84" strokeDasharray="2 1" strokeWidth="1.500" /></g> },
  { name: "Documentos", art: <><path d="M1 16l8-4 9 25-7-1z" fill="#ee5260" /><path d="M5 10l8-4 9 30-8 1z" fill="#fbb437" /><path d="M11 8l8-3 6 30-8 1z" fill="#7ac143" /><path d="M20 4l19 9-6 23-21-1z" fill="#1a6cf0" /><path d="M20 12l14 6M19 17l14 6M18 22l13 5" stroke="#fff" strokeWidth="1.700" /></> },
  { name: "VLC", art: <><path d="M7 27h26l3 9.500H4z" fill="#ef7d1c" /><path d="M17 3.500h5.500l7.500 25c-4 3-17 3-20.500 0z" fill="#f4f4f4" /><path d="M17 3.500h5.500l2 6h-9.500zM13 16h13l2.500 7H11z" fill="#f0821d" /></> },
  { name: "Vista Previa", art: <><g transform="rotate(-4 20 20)"><path d="M9 5h27v24H9z" fill="#d8c8a0" /><path d="M4 9h30v23H4z" fill="#fff" /><path d="M6 11h26v9H6z" fill="#6ba8e0" /><path d="M6 19h26v4H6z" fill="#2e6ab0" /><path d="M6 26c8-5 17-4 26-3v7H6z" fill="#ddd1b5" /></g><circle cx="30.500" cy="29" r="7" fill="#a7a7a7" fillOpacity=".85" stroke="#5b5e60" strokeWidth="2.500" /></> },
  { name: "Parallels", art: <path fillRule="evenodd" d="M20.500 1L37 10.500v8.500L30 23V16l-9.500-4.500L13 16v3L3.500 23V10.500zM37 20v10L20.500 40 4 30.500V27l8-4.500V26l8.500 4.500L29 26v-2z" fill="#d90f1b" /> },
  { name: "Terminal", art: <><rect x="3.500" y="5.500" width="33" height="28" rx="2" fill="#161616" stroke="#a6a6a6" strokeWidth="1.600" /><text x="7" y="15" fontFamily="Liberation Mono" fontSize="8" fontWeight="bold" fill="#eee">&gt;_</text></> },
  { name: "Atom", art: <><Ring fill="#34c088" />{[0, 60, 120].map((a) => <ellipse key={a} cx="20" cy="20.500" rx="4.500" ry="11.500" stroke="#eafaf3" strokeWidth="1.300" transform={`rotate(${a + 15} 20 20.500)`} />)}<circle cx="20" cy="20.500" r="1.800" fill="#fff" /></> },
  { name: "VS Code", art: <><path d="M27 3l10 4v27l-10 4z" fill="#2aa3ee" /><path d="M27 3v11L7 30l-4-3.500z" fill="#0f7fc8" /><path d="M27 38V27L7 11l-4 3.500z" fill="#1179bd" /></> },
  { name: "MySQL Workbench", art: <><rect x="2" y="2" width="37" height="37" rx="4" fill="#22577d" /><path d="M7 26C6 20 5 14 6 10c2-5 8-4 13-1 6 3 9 8 11 15l6 6-5-1 4 5-6-3M12 20c0 4 0 7 2 8 0-3 1-4 3-4M6 10c3 1 5 4 6 10" stroke="#e2ebf2" strokeWidth="1.300" /><path d="M28 6l3 3M31 6c3-1 5 2 3 4l3 3" stroke="#e2ebf2" strokeWidth="2" /></> },
  { name: "Excel", running: true, art: <><path d="M18 7h19v26H18z" fill="#fff" stroke="#ccc" strokeWidth=".5" /><path d="M23 10h5v3h-5zM30 10h5v3h-5zM23 15h5v3h-5zM30 15h5v3h-5zM23 20h5v3h-5zM30 20h5v3h-5zM23 25h5v3h-5zM30 25h5v3h-5z" fill="#2a7b4c" /><path d="M3 7l20-4v34L3 33z" fill="#1e7d48" /><path d="M8.500 14l7 13M15.500 14l-7 13" stroke="#fff" strokeWidth="2.400" /></> },
  { name: "Chrome", running: true, art: <><rect x="4" y="5" width="32" height="32" rx="5" fill="#f7f7f7" /><Chrome cx={20} cy={21} r={14} /></> },
];

const dockFiles: { name: string; art: React.ReactNode }[] = [
  { name: "Documento", art: <><path d="M7 2h17l9 9v27H7z" fill="#f2f2f2" /><path d="M24 2l9 9h-9z" fill="#cfcfcf" /><path d="M10 8h12M10 11h12M10 14h14M10 21h19M10 28h19" stroke="#bbb" /><path d="M10 17.500h20" stroke="#f0a04b" strokeWidth="1.500" /><path d="M10 24.500h20" stroke="#8cc98a" strokeWidth="1.500" /><text x="12" y="36" fontFamily="Liberation Sans" fontSize="6" fill="#888">DOCX</text></> },
  { name: "Ventana", art: <><path d="M2 10h36v21H2z" fill="#ececec" /><rect x="26" y="27" width="11" height="11" rx="2" fill="#fff" /><Chrome cx={31.5} cy={32.5} r={5} /></> },
  { name: "Papelera", art: <><path d="M7 5h27l-4 31c-4 2-15 2-19 0z" fill="#cfd1d3" /><path d="M8 6c3-5 9 0 12-4 4 2 10 0 13 4-5 4-20 4-25 0z" fill="#e4e4e4" /><path d="M11 5l4 3M17 4l3 4M23 4l2 3M29 5l-3 3" stroke="#3f6a55" strokeWidth="1.500" /><path d="M13 7l3-1M26 4l3 2" stroke="#c2504c" strokeWidth="1.500" /><ellipse cx="20.500" cy="6" rx="13.500" ry="3.500" stroke="#f0f0f0" /><path d="M15 14l1 8-3 4 4 6M20.500 14l2 8-3 10M27 13l-3 9 2 10" stroke="#dfe0e1" strokeWidth="2" /></> },
];

function DockItem({ name, art, running = false }: { name: string; art: React.ReactNode; running?: boolean }) {
  return (
    <button type="button" aria-label={name} className="flex w-[41px] flex-col items-center pt-[3px]">
      <Icon w={40} h={40}>{art}</Icon>
      {running && <span className="mt-px h-1 w-1 rounded-full bg-[#b9bac2]" />}
    </button>
  );
}

function Dock() {
  return (
    <footer className="relative flex h-[50px] shrink-0 justify-center bg-[#25232a]">
      <svg className="absolute inset-0 h-full w-full" aria-hidden="true">
        <filter id="rock" x="0" y="0" width="100%" height="100%" colorInterpolationFilters="sRGB">
          <feTurbulence type="fractalNoise" baseFrequency=".04 .06" numOctaves="5" seed="4" />
          <feColorMatrix values=".9 0 0 0 -.26  .88 0 0 0 -.25  .9 0 0 0 -.22  0 0 0 0 1" />
        </filter>
        <rect width="100%" height="100%" filter="url(#rock)" />
      </svg>
      <div className="relative flex rounded-t-[4px] bg-gradient-to-r from-[#29282c] via-[#30313d] to-[#2a2833] px-[3px]">
        {dockApps.map((a) => <DockItem key={a.name} {...a} />)}
        <div className="mx-2 my-[7px] w-px bg-[#5b5b66]" />
        {dockFiles.map((a) => <DockItem key={a.name} {...a} />)}
      </div>
    </footer>
  );
}

export default function App() {
  return (
    <div className="flex h-screen flex-col overflow-hidden bg-[#2b2730] font-['Liberation_Sans',Arial,sans-serif]">
      <MenuBar />
      <div className="flex min-h-0 flex-1 flex-col overflow-hidden rounded-[5px]">
        <div className="h-[50px] shrink-0 bg-gradient-to-b from-[#2c835a] to-[#1a734a]">
          <TitleBar />
          <RibbonTabs />
        </div>
        <Ribbon />
        <FormulaBar />
        <Sheet />
        <SheetTabs />
        <StatusBar />
      </div>
      <Dock />
    </div>
  );
}
